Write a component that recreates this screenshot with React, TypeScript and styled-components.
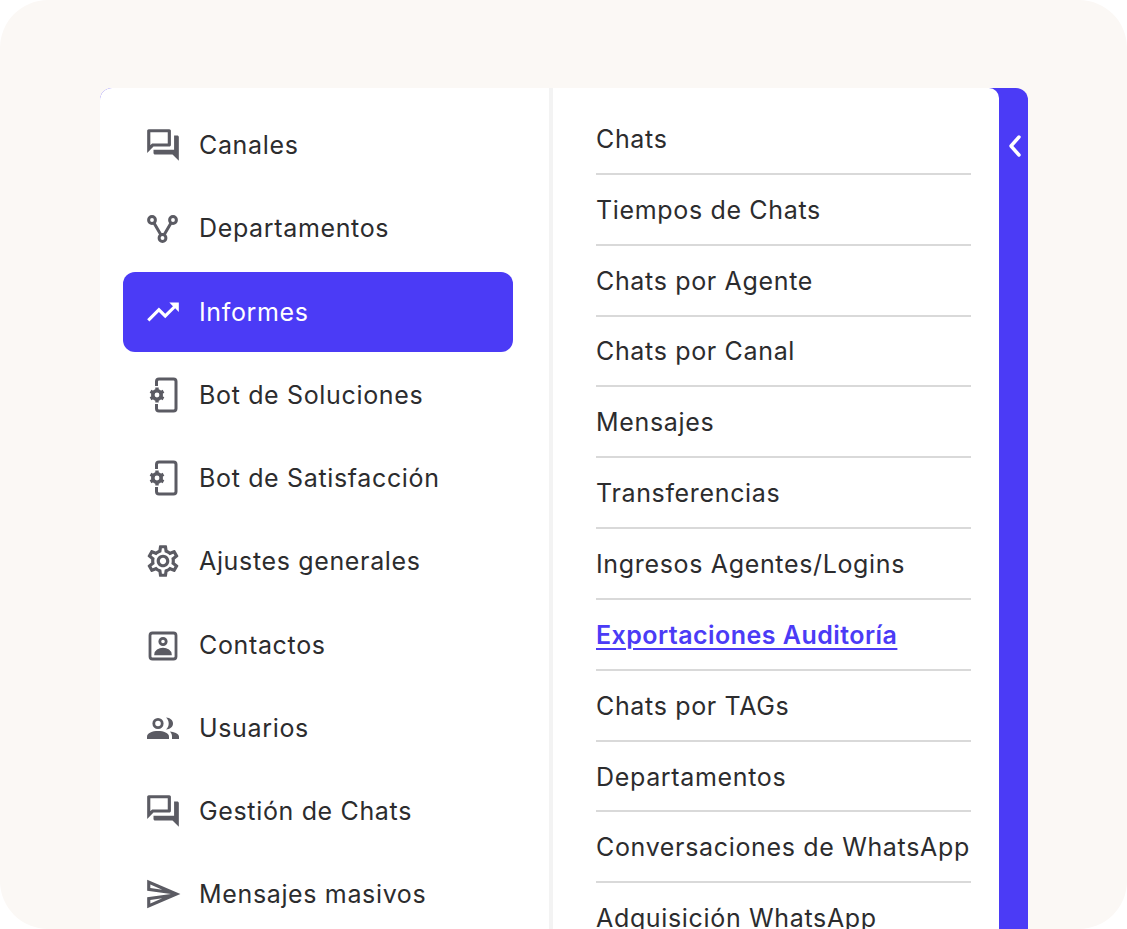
import React from "react";
import styled, { createGlobalStyle } from "styled-components";
import {
  MdOutlineQuestionAnswer,
  MdTrendingUp,
  MdOutlineSettings,
  MdOutlineSend,
} from "react-icons/md";

const Global = createGlobalStyle`
  html, body { margin: 0; padding: 0; background: #fff; }
  body { font-family: "Inter", "Liberation Sans", sans-serif; }
`;

const Frame = styled.div`
  width: 1127px;
  height: 929px;
  box-sizing: border-box;
  padding: 88px 99px 0 100px;
  background: #fbf8f5;
  border-radius: 48px;
  overflow: hidden;
`;

const Panel = styled.div`
  display: flex;
  height: 900px;
  background: #4b3bf6;
  border-radius: 12px 12px 0 0;
`;

const Sidebar = styled.nav`
  width: 453px;
  flex: none;
  box-sizing: border-box;
  padding: 17px 36px 0 23px;
  display: flex;
  flex-direction: column;
  gap: 3.25px;
  background: #fff;
  border-right: 4px solid #f3f3f3;
  border-radius: 12px 0 0 0;
`;

const NavItem = styled.div<{ $active?: boolean }>`
  height: 80px;
  flex: none;
  display: flex;
  align-items: center;
  gap: 17px;
  padding-left: 21px;
  border-radius: 12px;
  background: ${(p) => (p.$active ? "#4b3bf6" : "transparent")};
  color: ${(p) => (p.$active ? "#ffffff" : "#2c2c2e")};
  font-size: 25px;
  letter-spacing: 0.65px;
  svg { flex: none; color: ${(p) => (p.$active ? "#ffffff" : "#5b5b63")}; }
`;

const Content = styled.div`
  width: 446px;
  flex: none;
  box-sizing: border-box;
  padding: 16px 0 0 43px;
  background: #fff;
  border-radius: 0 10px 0 0;
`;

const ReportRow = styled.div`
  width: 375px;
  height: 67.85px;
  padding-top: 1px;
  display: flex;
  align-items: center;
  border-bottom: 2px solid #d9d9d9;
  white-space: nowrap;
  color: #2c2c2e;
  font-size: 25px;
  letter-spacing: 0.66px;
  &:last-child { border-bottom: 0; }
`;

const ActiveLink = styled.span`
  color: #4b3bf6;
  font-weight: 600;
  letter-spacing: 0.46px;
  text-decoration: underline;
  text-underline-offset: 4px;
  text-decoration-thickness: 2px;
`;

const Rail = styled.div`
  flex: 1;
  display: flex;
  justify-content: center;
  align-items: flex-start;
  padding-top: 46px;
  padding-left: 3px;
  color: #fff;
`;

const DepartmentsIcon = () => (
  <svg width="38" height="38" viewBox="0 0 38 38" fill="none" stroke="currentColor" strokeWidth="3">
    <circle cx="8" cy="11" r="3.4" />
    <circle cx="29" cy="11" r="3.4" />
    <circle cx="18.5" cy="29" r="3.4" />
    <path d="M10 14l7 12M27 14l-7 12" />
  </svg>
);

const BotIcon = () => (
  <svg width="38" height="38" viewBox="0 0 38 38" fill="none" stroke="currentColor">
    <path strokeWidth="3" d="M12.500 10V5.500a2.500 2.500 0 012.500-2.500h14.500a2.500 2.500 0 012.500 2.500v27a2.500 2.500 0 01-2.500 2.500H15a2.500 2.500 0 01-2.500-2.500V28" />
    <circle cx="13" cy="19" r="4.200" strokeWidth="3.600" />
    <path strokeWidth="3.400" d="M13 11.500v2.500M13 24v2.500M6.500 15.300l2.200 1.200M17.300 21.500l2.200 1.200M6.500 22.700l2.200-1.200M17.300 16.500l2.200-1.200" />
  </svg>
);

const ContactIcon = () => (
  <svg width="38" height="38" viewBox="0 0 38 38" fill="none" stroke="currentColor" strokeWidth="2.8">
    <rect x="6" y="7" width="26" height="26" rx="2.5" />
    <circle cx="19" cy="15.500" r="3.200" />
    <path fill="currentColor" strokeWidth="1.500" d="M11 28.500c0-4 4-6 8-6s8 2 8 6z" />
  </svg>
);

const UsersIcon = () => (
  <svg width="38" height="38" viewBox="0 0 38 38" fill="none" stroke="currentColor">
    <circle cx="14" cy="14.500" r="4.200" strokeWidth="2.800" />
    <path fill="currentColor" stroke="none" d="M22 8.500c4.500.3 7 2.800 7 6s-2.500 5.700-7 6c1.800-1.700 2.700-3.700 2.700-6s-.9-4.300-2.700-6z" />
    <path fill="currentColor" stroke="none" d="M3 30v-2.500c0-3.500 5.500-5.500 11-5.500s11 2 11 5.500V30z" />
    <path fill="currentColor" stroke="none" d="M26 22.500c3.500.5 9 2 9 5V30h-7v-2.500c0-2-.8-3.500-2-5z" />
  </svg>
);

const nav: { label: string; icon: React.ReactNode; active?: boolean }[] = [
  { label: "Canales", icon: <MdOutlineQuestionAnswer size={38} /> },
  { label: "Departamentos", icon: <DepartmentsIcon /> },
  { label: "Informes", icon: <MdTrendingUp size={38} />, active: true },
  { label: "Bot de Soluciones", icon: <BotIcon /> },
  { label: "Bot de Satisfacción", icon: <BotIcon /> },
  { label: "Ajustes generales", icon: <MdOutlineSettings size={38} /> },
  { label: "Contactos", icon: <ContactIcon /> },
  { label: "Usuarios", icon: <UsersIcon /> },
  { label: "Gestión de Chats", icon: <MdOutlineQuestionAnswer size={38} /> },
  { label: "Mensajes masivos", icon: <MdOutlineSend size={38} /> },
];

const reports = [
  "Chats",
  "Tiempos de Chats",
  "Chats por Agente",
  "Chats por Canal",
  "Mensajes",
  "Transferencias",
  "Ingresos Agentes/Logins",
  "Exportaciones Auditoría",
  "Chats por TAGs",
  "Departamentos",
  "Conversaciones de WhatsApp",
  "Adquisición WhatsApp",
];

export default function App() {
  return (
    <Frame>
      <Global />
      <Panel>
        <Sidebar>
          {nav.map((n) => (
            <NavItem key={n.label} $active={n.active}>
              {n.icon}
              <span>{n.label}</span>
            </NavItem>
          ))}
        </Sidebar>
        <Content>
          {reports.map((r) => (
            <ReportRow key={r}>
              {r === "Exportaciones Auditoría" ? <ActiveLink>{r}</ActiveLink> : r}
            </ReportRow>
          ))}
        </Content>
        <Rail>
          <svg width="14" height="24" viewBox="0 0 14 24" fill="none" stroke="currentColor" strokeWidth="3.4" strokeLinecap="round" strokeLinejoin="round">
            <path d="M11 3L3 12l8 9" />
          </svg>
        </Rail>
      </Panel>
    </Frame>
  );
}
